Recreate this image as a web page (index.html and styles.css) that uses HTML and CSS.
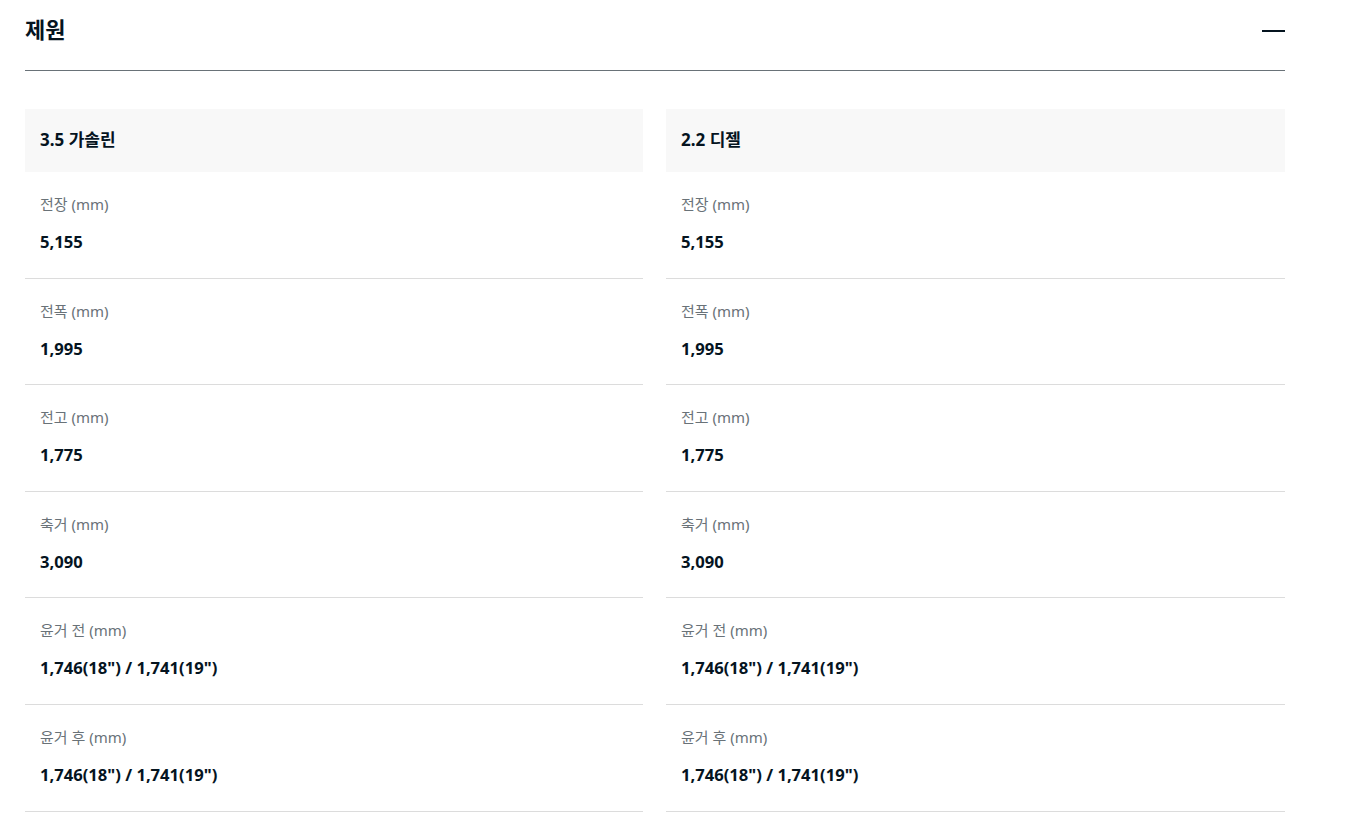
FILE: index.html
```html
<!DOCTYPE html>
<html lang="ko">
<head>
<meta charset="utf-8">
<title>제원</title>
<link rel="stylesheet" href="styles.css">
</head>
<body>
<section class="spec">
  <div class="spec-head">
    <h2 class="spec-title">제원</h2>
    <button class="toggle" aria-label="접기"><span class="minus"></span></button>
  </div>
  <div class="cols">
    <div class="col">
      <div class="col-head">3.5 가솔린</div>
      <div class="row"><div class="label">전장 (mm)</div><div class="value">5,155</div></div>
      <div class="row"><div class="label">전폭 (mm)</div><div class="value">1,995</div></div>
      <div class="row"><div class="label">전고 (mm)</div><div class="value">1,775</div></div>
      <div class="row"><div class="label">축거 (mm)</div><div class="value">3,090</div></div>
      <div class="row"><div class="label">윤거 전 (mm)</div><div class="value">1,746(18") / 1,741(19")</div></div>
      <div class="row"><div class="label">윤거 후 (mm)</div><div class="value">1,746(18") / 1,741(19")</div></div>
    </div>
    <div class="col">
      <div class="col-head">2.2 디젤</div>
      <div class="row"><div class="label">전장 (mm)</div><div class="value">5,155</div></div>
      <div class="row"><div class="label">전폭 (mm)</div><div class="value">1,995</div></div>
      <div class="row"><div class="label">전고 (mm)</div><div class="value">1,775</div></div>
      <div class="row"><div class="label">축거 (mm)</div><div class="value">3,090</div></div>
      <div class="row"><div class="label">윤거 전 (mm)</div><div class="value">1,746(18") / 1,741(19")</div></div>
      <div class="row"><div class="label">윤거 후 (mm)</div><div class="value">1,746(18") / 1,741(19")</div></div>
    </div>
  </div>
</section>
</body>
</html>
```
FILE: styles.css
```css
html, body {
  margin: 0;
  padding: 0;
  background: #fff;
}
body {
  font-family: "Noto Sans", "Noto Sans CJK KR", sans-serif;
  color: #05141f;
}
.spec {
  width: 1260px;
  margin-left: 25px;
}
.spec-head {
  display: flex;
  align-items: center;
  justify-content: space-between;
  box-sizing: border-box;
  height: 71px;
  padding-bottom: 12px;
  border-bottom: 1px solid #697278;
}
.spec-title {
  margin: 0;
  font-size: 22px;
  font-weight: 700;
  line-height: 30px;
}
.toggle {
  border: 0;
  background: none;
  padding: 0;
  width: 23px;
  height: 24px;
  display: flex;
  align-items: center;
  cursor: pointer;
}
.minus {
  display: block;
  width: 23px;
  height: 2px;
  background: #05141f;
  margin-top: 3px;
}
.cols {
  display: grid;
  grid-template-columns: 618px 619px;
  column-gap: 23px;
  margin-top: 38px;
}
.col-head {
  background: #f8f8f8;
  box-sizing: border-box;
  height: 63px;
  padding: 0 15px 4px;
  display: flex;
  align-items: center;
  font-size: 17px;
  font-weight: 700;
}
.row {
  padding: 20px 15px 23.6px;
  border-bottom: 1px solid #dcdcdc;
}
.label {
  font-size: 15px;
  line-height: 24px;
  color: #697278;
}
.value {
  margin-top: 14px;
  font-size: 16.6px;
  line-height: 24px;
  font-weight: 700;
}
```
